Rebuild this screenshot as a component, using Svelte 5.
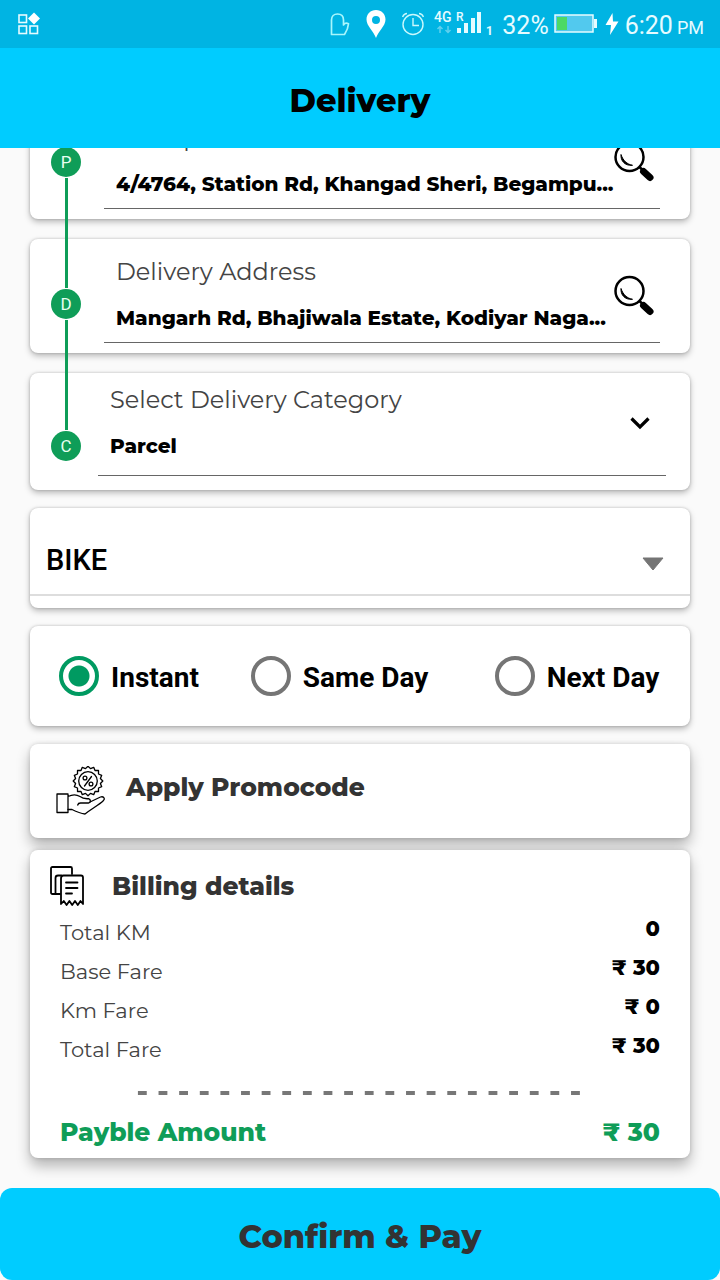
<script lang="ts">
  import { onMount } from 'svelte';

  interface Stop {
    id: string;
    label: string;
    address: string;
  }

  const stops: Stop[] = [
    { id: 'pickup', label: 'Pickup Address', address: '4/4764, Station Rd, Khangad Sheri, Begampu...' },
    { id: 'delivery', label: 'Delivery Address', address: 'Mangarh Rd, Bhajiwala Estate, Kodiyar Naga...' },
  ];

  const steps = ['P', 'D', 'C'];
  const speeds = ['Instant', 'Same Day', 'Next Day'];

  const bill = [
    { label: 'Total KM', value: '0' },
    { label: 'Base Fare', value: '₹ 30' },
    { label: 'Km Fare', value: '₹ 0' },
    { label: 'Total Fare', value: '₹ 30' },
  ];

  let category = $state('Parcel');
  let vehicle = $state('BIKE');
  let speed = $state('Instant');
  let scroller: HTMLElement;

  // toothed badge outline used by the promo icon
  function badge(cx: number, cy: number, outer: number, inner: number, teeth: number): string {
    const pts: string[] = [];
    for (let i = 0; i < teeth * 2; i++) {
      const r = i % 2 ? inner : outer;
      const a = (Math.PI * i) / teeth - Math.PI / 2;
      pts.push(`${(cx + r * Math.cos(a)).toFixed(1)},${(cy + r * Math.sin(a)).toFixed(1)}`);
    }
    return pts.join(' ');
  }

  // open on the bill, the user came here to confirm
  onMount(() => {
    scroller.scrollTop = scroller.scrollHeight;
  });
</script>

<div class="app">
  <div class="status">
    <svg class="apps" width="22" height="24" viewBox="0 0 22 24" fill="none" stroke="#e6fbff" stroke-width="1.6">
      <rect x="1" y="3" width="7.5" height="7.5" />
      <rect x="1" y="14" width="7.5" height="7.5" />
      <rect x="12" y="14" width="7.5" height="7.5" />
      <path d="M16 0.5l6 6-6 6-6-6z" fill="#fff" stroke="none" />
    </svg>

    <div class="status-icons">
      <svg width="20" height="24" viewBox="0 0 20 24" fill="none" stroke="#a8f6fc" stroke-width="1.7" stroke-linejoin="round">
        <path d="M1.5 22.5V8C1.5 4 4 2 7.5 2S13.5 4 13.5 8v5c1.2-1.8 3-2.2 5-1.2-.3 4-1.8 7.5-4 10.7z" />
      </svg>
      <svg width="20" height="30" viewBox="0 0 20 30" fill="#fff">
        <path fill-rule="evenodd" d="M10 1C4.5 1 0.5 5 0.5 10.5 0.5 17 7.5 22 10 29c2.5-7 9.5-12 9.5-18.5C19.5 5 15.5 1 10 1zm0 6a4 4 0 1 1 0 8 4 4 0 0 1 0-8z" />
      </svg>
      <svg width="22" height="24" viewBox="0 0 22 24" fill="none" stroke="#c9f8fd" stroke-width="1.4">
        <circle cx="11" cy="12.5" r="10" />
        <path d="M11 6v7.5h6M0.5 5Q2 1.5 5 1.5M21.5 5Q20 1.5 17 1.5" />
      </svg>
    </div>

    <svg class="signal" width="58" height="28" viewBox="0 0 58 28" fill="#e6fbff">
      <text x="0" y="12" font-size="14" font-weight="500">4G</text>
      <text x="22" y="11" font-size="12" font-weight="500">R</text>
      <text x="52" y="25" font-size="12" font-weight="700">1</text>
      <g stroke="#5fd0ee" stroke-width="1.5" fill="none">
        <path d="M6 23v-6M3.5 19L6 16.5 8.5 19M14 16v6M11.5 20l2.5 2.5 2.5-2.5" />
      </g>
      <rect x="23" y="18" width="4" height="5" />
      <rect x="30" y="13" width="4" height="10" />
      <rect x="37" y="8" width="4" height="15" />
      <rect x="43" y="2" width="4" height="21" />
    </svg>

    <span class="reading">32%</span>
    <svg class="battery" width="43" height="20" viewBox="0 0 43 20">
      <rect x="1" y="1" width="38" height="17" fill="#52c9ee" stroke="#e6fbff" stroke-width="1.5" />
      <rect x="3" y="3" width="10" height="13" fill="#4cd964" />
      <rect x="40" y="5" width="3" height="9" fill="#e6fbff" />
    </svg>
    <svg class="bolt" width="14" height="24" viewBox="0 0 14 24" fill="#fff">
      <path d="M7.5 1L0.5 13h5.5l-1 10L13.5 9.5H8z" />
    </svg>
    <span class="reading">6:20<small>PM</small></span>
  </div>

  <header class="bar">
    <h1>Delivery</h1>
  </header>

  <main bind:this={scroller}>
    <div class="steps">
      {#each stops as stop}
        <section class="card stop">
          <div class="field">
            <div class="field-text">
              <label for={stop.id}>{stop.label}</label>
              <input id={stop.id} type="text" readonly value={stop.address} />
            </div>
            <button class="search" type="button" aria-label="Search {stop.label}">
              <svg width="40" height="42" viewBox="0 0 40 42" fill="none" stroke="#000">
                <circle cx="15.5" cy="17" r="14" stroke-width="2.5" />
                <path d="M7 14.5c-.5 6 3.5 11.500 11.500 10.800-5.500-1-9.500-4.800-11.500-10.800z" fill="#000" stroke-width="1" />
                <path d="M25.5 27l3 3" stroke-width="2.5" />
                <path d="M29.5 31.5l6.5 6" stroke-width="7" stroke-linecap="round" />
              </svg>
            </button>
          </div>
        </section>
      {/each}

      <section class="card category">
        <div class="field">
          <div class="field-text">
            <label for="category">Select Delivery Category</label>
            <select id="category" bind:value={category}>
              <option>Parcel</option>
              <option>Documents</option>
              <option>Food</option>
            </select>
          </div>
          <svg class="chevron" width="20" height="14" viewBox="0 0 20 14" fill="none" stroke="#000" stroke-width="3.2">
            <path d="M1.5 2.5l8.5 8.5 8.5-8.5" />
          </svg>
        </div>
      </section>

      <div class="rail">
        {#each steps as step, i}
          {#if i > 0}<span class="rail-line"></span>{/if}
          <span class="dot">{step}</span>
        {/each}
      </div>
    </div>

    <section class="card vehicle">
      <div class="vehicle-row">
        <select aria-label="Vehicle" bind:value={vehicle}>
          <option>BIKE</option>
          <option>TEMPO</option>
        </select>
        <svg width="22" height="14" viewBox="0 0 22 14" fill="#757575" stroke="#757575" stroke-width="1" stroke-linejoin="round">
          <path d="M1 1h20L11 13z" />
        </svg>
      </div>
    </section>

    <section class="card speeds">
      {#each speeds as s}
        <label class="speed">
          <input type="radio" name="speed" value={s} bind:group={speed} />
          <span>{s}</span>
        </label>
      {/each}
    </section>

    <button class="card raised promo" type="button">
      <svg width="50" height="50" viewBox="0 0 50 50" fill="none" stroke="#000" stroke-width="1.3" stroke-linejoin="round" stroke-linecap="round">
        <polygon points={badge(32, 15, 14.8, 12.6, 16)} />
        <circle cx="32" cy="15" r="9.3" />
        <path d="M35.5 10.500l-7 9.500" />
        <circle cx="29" cy="12" r="1.9" />
        <circle cx="35" cy="18" r="1.9" />
        <path d="M1 28h11v18.500H1zM12 30.500c4-2 8-2.500 12 0 2.500 2 5 2.500 8.500 2.200 2.500.8 2.500 4 0 4.300H24.500c-1.500 0-2.500.8-2.800 2" />
        <path d="M34 36L44.500 31c3-1 5 1.500 3 3.500C43 39 36 42.500 29 48c-4-.5-9-2.500-13-4.500H12" />
      </svg>
      <span>Apply Promocode</span>
    </button>

    <section class="card raised billing">
      <h2>
        <svg width="34" height="40" viewBox="0 0 34 40" fill="none" stroke="#000" stroke-width="1.8" stroke-linejoin="round" stroke-linecap="round">
          <path d="M5.5 28H2.5C1.5 28 1 27.5 1 26.5V2.5C1 1.5 1.5 1 2.5 1H20.5C21.500 1 22 1.5 22 2.5V8" />
          <path d="M11.5 9.5H8C6.5 9.5 5.5 10.5 5.5 12V28H10" />
          <path d="M11 35V12.5C11 10.5 12 9.5 13.5 9.5H31C32.3 9.5 33 10.2 33 11.5V38l-2.5-3-2.7 4-2.8-4-2.8 4-2.8-4-2.8 4-2.8-4L11 38z" />
          <path d="M16 16.5h11.5M16 22h11.5M16 27.5h6" />
        </svg>
        Billing details
      </h2>
      <dl>
        {#each bill as line}
          <div class="line">
            <dt>{line.label}</dt>
            <dd>{line.value}</dd>
          </div>
        {/each}
      </dl>
      <hr />
      <div class="total">
        <span>Payble Amount</span>
        <span>₹ 30</span>
      </div>
    </section>
  </main>

  <button class="confirm" type="button">Confirm &amp; Pay</button>
</div>

<style>
  :global(body) {
    margin: 0;
    background: #fafafa;
  }

  .app {
    height: 100vh;
    display: flex;
    flex-direction: column;
    font-family: Montserrat, Inter, sans-serif;
    color: #000;
  }

  button, input, select {
    font: inherit;
    color: inherit;
    background: none;
    border: none;
    padding: 0;
    margin: 0;
    outline: none;
  }
  select { appearance: none; }
  button { cursor: pointer; }
  svg { display: block; flex-shrink: 0; }

  /* Status bar */
  .status {
    display: flex;
    align-items: center;
    height: 48px;
    flex-shrink: 0;
    padding: 0 16px 0 18px;
    background: #00b4e3;
    color: #e6fbff;
    font-family: Roboto, sans-serif;
  }
  .apps { margin-right: auto; }
  .status-icons {
    display: flex;
    align-items: center;
    gap: 16px;
  }
  .signal { margin: 0 10px; }
  .battery { margin: 0 8px 0 5px; }
  .bolt { margin-right: 6px; }
  .reading {
    padding-top: 2px;
    font-size: 25px;
  }
  .reading small {
    margin-left: 4px;
    font-size: 18px;
  }

  .bar {
    display: flex;
    align-items: center;
    justify-content: center;
    box-sizing: border-box;
    height: 100px;
    padding-top: 4px;
    flex-shrink: 0;
    background: #00ccff;
  }
  h1 {
    margin: 0;
    font-size: 32px;
    font-weight: 800;
  }

  main {
    flex: 1;
    min-height: 0;
    overflow-y: auto;
    scrollbar-width: none;
    display: flex;
    flex-direction: column;
    gap: 18px;
    padding: 20px 30px 30px;
  }
  main > * { flex-shrink: 0; }

  .card {
    background: #fff;
    border-radius: 8px;
    box-shadow: 0 3px 6px rgba(0, 0, 0, 0.26), 0 0 3px rgba(0, 0, 0, 0.2);
  }
  .raised {
    box-shadow: 0 8px 14px rgba(0, 0, 0, 0.28), 0 0 4px rgba(0, 0, 0, 0.16);
  }

  /* Addresses and category */
  .steps {
    position: relative;
    display: flex;
    flex-direction: column;
    gap: 20px;
  }
  .stop { padding: 16px 30px 10px 74px; }
  .category { padding: 10px 24px 14px 68px; }
  .field {
    display: flex;
    align-items: center;
    border-bottom: 1px solid #666;
    padding: 0 0 7px 12px;
  }
  .category .field { padding-bottom: 12px; }
  .field-text {
    flex: 1;
    min-width: 0;
    display: flex;
    flex-direction: column;
    gap: 12px;
  }
  .field label {
    font-size: 24px;
    line-height: 34px;
    color: #444;
  }
  .field input, .field select {
    width: 100%;
    height: 34px;
    font-size: 20px;
    font-weight: 800;
    text-overflow: ellipsis;
  }
  .search { margin-right: 6px; }
  .chevron { margin-right: 16px; }

  .rail {
    position: absolute;
    left: 21px;
    bottom: 29px;
    display: flex;
    flex-direction: column;
    align-items: center;
  }
  .rail-line {
    width: 3px;
    height: 110px;
    margin: 1px 0;
    background: #0f9d58;
  }
  .dot {
    width: 30px;
    height: 30px;
    border-radius: 50%;
    background: #0f9d58;
    color: #e8fff2;
    font: 17px/30px Roboto, sans-serif;
    text-align: center;
  }

  .vehicle { padding: 16px 0 12px; }
  .vehicle-row {
    display: flex;
    align-items: center;
    box-sizing: border-box;
    height: 72px;
    padding: 2px 26px 0 16px;
    border-bottom: 2px solid #ddd;
    font-family: Roboto, sans-serif;
    font-size: 29px;
    font-weight: 500;
  }
  .vehicle select { flex: 1; }
  .vehicle svg { margin-top: 8px; }

  .speeds {
    display: grid;
    grid-template-columns: 11fr 14fr 10fr;
    align-items: center;
    height: 100px;
    padding: 0 21px 0 29px;
  }
  .speed {
    display: flex;
    align-items: center;
    gap: 12px;
    font-family: Roboto, sans-serif;
    font-size: 28px;
    font-weight: 700;
    white-space: nowrap;
  }
  .speed span { padding-top: 2px; }
  .speed input {
    appearance: none;
    flex-shrink: 0;
    box-sizing: border-box;
    width: 40px;
    height: 40px;
    border: 4px solid #757575;
    border-radius: 50%;
  }
  .speed input:checked {
    border-color: #009a61;
    background: radial-gradient(circle, #009a61 10px, transparent 11px);
  }

  .promo {
    display: flex;
    align-items: center;
    gap: 20px;
    height: 94px;
    padding: 0 26px;
    font-size: 25px;
    font-weight: 800;
    color: #333;
  }
  .promo span { padding-bottom: 8px; }

  /* Bill */
  .billing {
    margin-top: -6px;
    padding: 16px 30px 6px;
  }
  h2 {
    display: flex;
    align-items: center;
    gap: 28px;
    margin: 0 0 7px -10px;
    font-size: 25px;
    line-height: 40px;
    font-weight: 800;
    color: #333;
  }
  dl, dd { margin: 0; }
  .line {
    display: flex;
    justify-content: space-between;
    align-items: flex-start;
  }
  dt {
    font-size: 21px;
    line-height: 39px;
    color: #444;
  }
  dd {
    font-size: 21px;
    line-height: 31px;
    font-weight: 800;
  }
  hr {
    height: 4px;
    margin: 22px 73px 17px;
    border: none;
    background: linear-gradient(to right, transparent 5px, #777 5px 14px, transparent 14px) 0 0 / 21px 4px round;
  }
  .total {
    display: flex;
    justify-content: space-between;
    font-size: 25px;
    line-height: 40px;
    font-weight: 800;
    color: #0f9d58;
  }

  .confirm {
    height: 92px;
    flex-shrink: 0;
    padding-top: 4px;
    border-radius: 12px;
    background: #00ccff;
    color: #333;
    font-size: 32px;
    font-weight: 800;
  }
</style>
